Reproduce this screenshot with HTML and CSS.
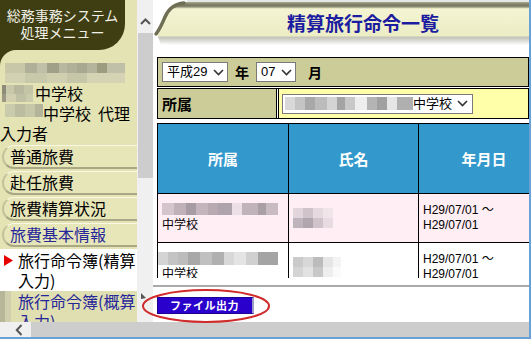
FILE: index.html
```html
<!DOCTYPE html>
<html lang="ja">
<head>
<meta charset="utf-8">
<title>精算旅行命令一覧</title>
<link rel="stylesheet" href="styles.css">
</head>
<body>
<div class="window">
  <div class="main">
    <nav class="nav">
      <div class="nav-head">総務事務システム<br>処理メニュー</div>
      <div class="nav-panel">
        <div class="user">
          <div class="uline"><span class="blur b1"></span></div>
          <div class="uline"><span class="blur b2"></span>中学校</div>
          <div class="uline"><span class="blur b3"></span>中学校<span class="gap"></span>代理</div>
          <div class="uline">入力者</div>
        </div>
        <ul class="menu">
          <li class="item">普通旅費</li>
          <li class="item">赴任旅費</li>
          <li class="item">旅費精算状況</li>
          <li class="item link">旅費基本情報</li>
          <li class="item active">
            <svg class="mark" width="9" height="11" viewBox="0 0 9 11"><polygon points="0,0 9,5.5 0,11" fill="#e60000"/></svg>
            <span>旅行命令簿(精算<br>入力)</span>
          </li>
          <li class="item sub link"><span>旅行命令簿(概算<br>入力)</span></li>
        </ul>
      </div>
    </nav>
    <div class="vscroll">
      <svg class="vs-arrow" width="11" height="7" viewBox="0 0 11 7"><path d="M1 6 L5.5 1.5 L10 6" fill="none" stroke="#555" stroke-width="2"/></svg>
      <div class="vs-thumb"></div>
    </div>
    <main class="content">
      <header class="banner">
        <svg class="swoosh" width="34" height="45" viewBox="0 0 34 45">
          <path d="M0 0 H34 V2 C22 3 16 9 12 17 C9 24 7 30 4 34 L8 45 H0 Z" fill="#fff"/>
          <path d="M31 3 C21 4 15 10 12 17 C9 24 7 29 3 34" fill="none" stroke="#6f6f55" stroke-width="3.5" stroke-linecap="round"/>
        </svg>
        <h1 class="title">精算旅行命令一覧</h1>
      </header>

      <div class="date-box">
        <span class="select s-era">平成29<svg width="11" height="7" viewBox="0 0 11 7"><path d="M1 1 L5.5 5.5 L10 1" fill="none" stroke="#333" stroke-width="1.6"/></svg></span>
        <b class="unit">年</b>
        <span class="select s-month">07<svg width="11" height="7" viewBox="0 0 11 7"><path d="M1 1 L5.5 5.5 L10 1" fill="none" stroke="#333" stroke-width="1.6"/></svg></span>
        <b class="unit unit-m">月</b>
      </div>

      <div class="org-box">
        <div class="org-label">所属</div>
        <div class="org-value">
          <span class="select s-org"><span class="txt"><span class="blur b-org"></span>中学校</span><svg width="11" height="7" viewBox="0 0 11 7"><path d="M1 1 L5.5 5.5 L10 1" fill="none" stroke="#333" stroke-width="1.6"/></svg></span>
        </div>
      </div>

      <div class="table-wrap">
        <table class="list">
          <colgroup><col class="c1"><col class="c2"><col class="c3"></colgroup>
          <thead>
            <tr><th>所属</th><th>氏名</th><th>年月日</th></tr>
          </thead>
          <tbody>
            <tr class="odd">
              <td><span class="blur r1c1"></span>中学校</td>
              <td><span class="blur r1c2"></span></td>
              <td>H29/07/01 ～<br>H29/07/01</td>
            </tr>
            <tr>
              <td><span class="blur r2c1"></span>中学校</td>
              <td><span class="blur r2c2"></span></td>
              <td>H29/07/01 ～<br>H29/07/01</td>
            </tr>
          </tbody>
        </table>
      </div>

      <div class="footer">
        <button class="btn-out" type="button">ファイル出力</button>
      </div>
    </main>
  </div>
  <div class="hscroll">
    <div class="hs-left"><svg width="8" height="12" viewBox="0 0 8 12"><path d="M6.5 1 L1.8 6 L6.5 11" fill="none" stroke="#555" stroke-width="2"/></svg></div>
    <div class="hs-thumb"></div>
  </div>
  <svg class="ring" width="132" height="36" viewBox="0 0 132 36">
    <ellipse cx="65" cy="18" rx="63" ry="16" fill="none" stroke="#d02a2a" stroke-width="2"/>
    <polygon points="0,5 5,10 0,11" fill="#555"/>
  </svg>
</div>
</body>
</html>
```

FILE: styles.css
```css
* { box-sizing: border-box; margin: 0; padding: 0; }

html, body {
  width: 531px;
  height: 339px;
  overflow: hidden;
  background: #fff;
}

body {
  font-family: "Noto Sans CJK JP", sans-serif;
  color: #000;
}

.window {
  position: relative;
  width: 531px;
  height: 339px;
  display: flex;
  flex-direction: column;
  border-right: 2px solid #6aa2d8;
  border-bottom: 2px solid #6aa2d8;
}

.main {
  display: flex;
  height: 322px;
  flex: none;
}

/* ---------- left menu frame ---------- */
.nav {
  width: 137px;
  flex: none;
  overflow: hidden;
  background: linear-gradient(#3f3e13, #3f3e13) 0 0 / 24px 80px no-repeat, #e3e3b3;
}

.nav-head {
  width: 125px;
  height: 50px;
  background: #3f3e13;
  border-bottom-right-radius: 26px;
  color: #f0f0e6;
  font-size: 14px;
  line-height: 17px;
  text-align: center;
  padding-top: 7px;
}

.nav-panel {
  height: 272px;
  background: #e3e3b3;
  border-top-left-radius: 16px;
}

.user {
  padding-top: 13px;
  font-size: 16px;
  line-height: 20px;
}

.uline {
  display: flex;
  align-items: center;
  min-height: 20px;
  white-space: nowrap;
}

.gap { display: inline-block; width: 7px; }

.blur { display: block; flex: none; }

.b1 {
  width: 120px;
  height: 20px;
  margin-left: 5px;
  background:
    linear-gradient(90deg, #c8c8a8 0 20px, #b0b098 20px 32px, #c0c0a8 32px 42px, #a0a088 42px 54px, #b8b8a0 54px 62px, #b0b098 62px 72px, #a8a890 72px 82px, #b4b49c 82px 92px, #9c9c80 92px 102px, #c0c0a8 102px) 0 0 / 100% 10px no-repeat,
    linear-gradient(90deg, #d2d2b2 0 20px, #c8c8aa 20px 42px, #d0d0b0 42px 62px, #c6c6a8 62px 82px, #d4d4b4 82px) 0 10px / 100% 10px no-repeat;
}

.b2 {
  width: 31px;
  height: 17px;
  margin: 0 2px 0 2px;
  background:
    linear-gradient(90deg, #8c8c78 0 4px, #c8c8aa 4px 12px, #b8b89e 12px 22px, #c4c4a6 22px) 0 0 / 100% 9px no-repeat,
    linear-gradient(90deg, #9a9a84 0 4px, #d0d0b0 4px 14px, #c0c0a4 14px 24px, #cacaac 24px) 0 9px / 100% 8px no-repeat;
}

.b3 {
  width: 38px;
  height: 13px;
  margin: 1px 0 0 5px;
  align-self: flex-start;
  background: linear-gradient(90deg, #cacaac 0 10px, #bcbca0 10px 20px, #c6c6a8 20px 30px, #b4b49a 30px);
}

.menu {
  list-style: none;
  margin-top: 2px;
}

.item {
  height: 24px;
  margin: 0 0 2px 2px;
  padding-left: 6px;
  background: #e6e6b8;
  border-top: 1px solid #f8f8e4;
  border-bottom: 2px solid #a8a884;
  border-left: 2px solid #c2c29a;
  border-radius: 12px 0 0 12px;
  font-size: 16px;
  line-height: 20px;
  white-space: nowrap;
  overflow: hidden;
}

.link { color: #26269a; }

.item.active {
  display: flex;
  align-items: flex-start;
  height: auto;
  margin: 0;
  padding: 1px 0 1px 4px;
  background: #fff;
  border: none;
  border-radius: 0;
  color: #000;
}

.mark {
  flex: none;
  margin: 5px 5px 0 0;
}

.item.sub {
  height: 40px;
  margin: 0;
  padding-left: 13px;
  border: none;
  border-left: 5px solid #b6b698;
  border-radius: 0;
  background: linear-gradient(90deg, #cfcfae 0 6px, #dfdfb2 6px);
}

/* ---------- scrollbars ---------- */
.vscroll {
  width: 16px;
  flex: none;
  background: #f0f0f0;
  padding-top: 18px;
}

.vs-arrow {
  display: block;
  margin-left: 3px;
}

.vs-thumb {
  margin: 8px 0 0 1px;
  height: 145px;
  background: #cdcdcd;
}

.hscroll {
  height: 15px;
  flex: none;
  display: flex;
}

.hs-left {
  width: 31px;
  background: #f0f0f0;
  padding: 2px 0 0 15px;
}

.hs-left svg { display: block; }

.hs-thumb {
  flex: 1;
  background: #cdcdcd;
}

/* ---------- content frame ---------- */
.content {
  flex: 1;
  min-width: 0;
  overflow: hidden;
  background: #fff;
}

.banner {
  position: relative;
  height: 45px;
  display: flex;
  align-items: center;
  background: linear-gradient(to bottom,
    #e4e8e4 0, #e4e8e4 2px,
    #a9a992 2px, #76765c 5px, #8e8e76 7px,
    #d6d6b6 8px, #f4f4d2 9px, #ecedc5 36px,
    #c2c2b6 37px, #d6d6d0 40px, #ffffff 45px);
}

.swoosh {
  position: absolute;
  left: 0;
  top: 0;
}

.title {
  margin-left: 134px;
  font-size: 19px;
  font-weight: bold;
  line-height: 1;
  color: #1c1ca0;
  white-space: nowrap;
}

.date-box {
  margin: 12px 0 0 4px;
  height: 30px;
  border: 1px solid #000;
  background: #cccc99;
  display: flex;
  align-items: center;
  padding-left: 4px;
}

.select {
  display: inline-flex;
  align-items: center;
  justify-content: space-between;
  height: 20px;
  border: 1px solid #7a7a7a;
  background: #fff;
  padding: 0 3px 0 4px;
  font-family: "Liberation Sans", "Noto Sans CJK JP", sans-serif;
  font-size: 13px;
  line-height: 18px;
  white-space: nowrap;
}

.s-era { width: 66px; }
.s-month { width: 40px; }

.unit {
  margin-left: 7px;
  font-size: 14px;
  font-weight: bold;
}

.unit + .select { margin-left: 7px; }
.unit-m { margin-left: 12px; }

.org-box {
  margin: 1px 0 0 4px;
  height: 31px;
  border: 1px solid #000;
  display: flex;
}

.org-label {
  width: 119px;
  background: #cccc99;
  border-right: 1px solid #000;
  display: flex;
  align-items: center;
  padding-left: 4px;
  font-size: 15px;
  font-weight: bold;
}

.org-value {
  flex: 1;
  margin-left: 1px;
  border-left: 1px solid #000;
  background: #ffffaa;
  display: flex;
  align-items: center;
  padding-left: 3px;
}

.s-org {
  width: 191px;
  padding-left: 2px;
  padding-right: 4px;
}

.s-org .txt {
  display: flex;
  align-items: center;
}

.b-org {
  width: 128px;
  height: 13px;
  background: linear-gradient(90deg, #d8d8d8 0 10px, #c4c4c4 10px 20px, #a8a8a8 20px 30px, #bcbcbc 30px 42px, #d4d4d4 42px 52px, #a4a4a4 52px 60px, #c8c8c8 60px 70px, #eeeeee 70px 82px, #b4b4b4 82px 92px, #a0a0a0 92px 102px, #e6e6e6 102px 112px, #b0b0b0 112px);
}

.table-wrap {
  margin: 4px 0 0 4px;
  height: 155px;
  overflow: hidden;
}

.list {
  width: 393px;
  table-layout: fixed;
  border-collapse: separate;
  border-spacing: 0;
  border-top: 1px solid #000;
  border-left: 1px solid #000;
}

.c1 { width: 131px; }
.c2 { width: 130px; }
.c3 { width: 131px; }

.list th,
.list td {
  border-right: 1px solid #000;
  border-bottom: 1px solid #000;
}

.list thead tr { height: 70px; }
.list tbody tr { height: 49px; }

.list th {
  background: #3399cc;
  color: #fff;
  font-size: 15px;
  font-weight: bold;
  text-align: center;
}

.list td {
  padding: 0 3px 0 4px;
  font-family: "Liberation Sans", "Noto Sans CJK JP", sans-serif;
  font-size: 12px;
  line-height: 15px;
  vertical-align: middle;
  white-space: nowrap;
}

.list tr.odd td { background: #ffeef4; }

.r1c1 {
  width: 116px;
  height: 12px;
  margin-bottom: 3px;
  background: linear-gradient(90deg, #d4c4cc 0 12px, #c0b0b8 12px 24px, #a89ca4 24px 34px, #c4b4bc 34px 46px, #b8a8b0 46px 56px, #b0a4ac 56px 70px, #ecdfe5 70px 80px, #c0b4ba 80px 96px, #a8a0a4 96px 104px, #c8bcc2 104px);
}

.r1c2 {
  width: 40px;
  height: 20px;
  background:
    linear-gradient(90deg, #e2d6dc 0 10px, #d0c4ca 10px 20px, #e6dae0 20px 30px, #f0e6ea 30px) 0 0 / 100% 10px no-repeat,
    linear-gradient(90deg, #c0b4bc 0 10px, #b2a6ae 10px 20px, #d0c4ca 20px 30px, #e8dce2 30px) 0 10px / 100% 10px no-repeat;
}

.r2c1 {
  width: 120px;
  height: 13px;
  margin-bottom: 2px;
  margin-left: -4px;
  background: linear-gradient(90deg, #d4d4d4 0 10px, #c4c4c4 10px 20px, #bcbcbc 20px 30px, #a8a8a8 30px 42px, #c0c0c0 42px 54px, #b0b0b0 54px 66px, #d8d8d8 66px 76px, #e4e4e4 76px 88px, #d0d0d0 88px 100px, #a4a4a4 100px);
}

.r2c2 {
  width: 48px;
  height: 20px;
  background:
    linear-gradient(90deg, #cacaca 0 10px, #d8d8d8 10px 20px, #bcbcbc 20px 30px, #e6e6e6 30px 40px, #f4f4f4 40px) 0 0 / 100% 10px no-repeat,
    linear-gradient(90deg, #d4d4d4 0 10px, #e2e2e2 10px 20px, #c8c8c8 20px 30px, #eeeeee 30px 40px, #fafafa 40px) 0 10px / 100% 10px no-repeat;
}

.footer {
  margin-top: 7px;
  border-top: 2px solid #aaaaaa;
  padding: 10px 0 0 4px;
}

.btn-out {
  display: block;
  width: 97px;
  height: 17px;
  padding: 0 0 0 12px;
  text-align: left;
  background: #2a00cc;
  color: #fff;
  border: 1px solid #1c0090;
  border-right: 2px solid #9c9cc4;
  font-family: "Noto Sans CJK JP", sans-serif;
  font-size: 11px;
  font-weight: bold;
  letter-spacing: 0.5px;
  line-height: 15px;
}

.ring {
  position: absolute;
  left: 141px;
  top: 288px;
  z-index: 2;
}
```
